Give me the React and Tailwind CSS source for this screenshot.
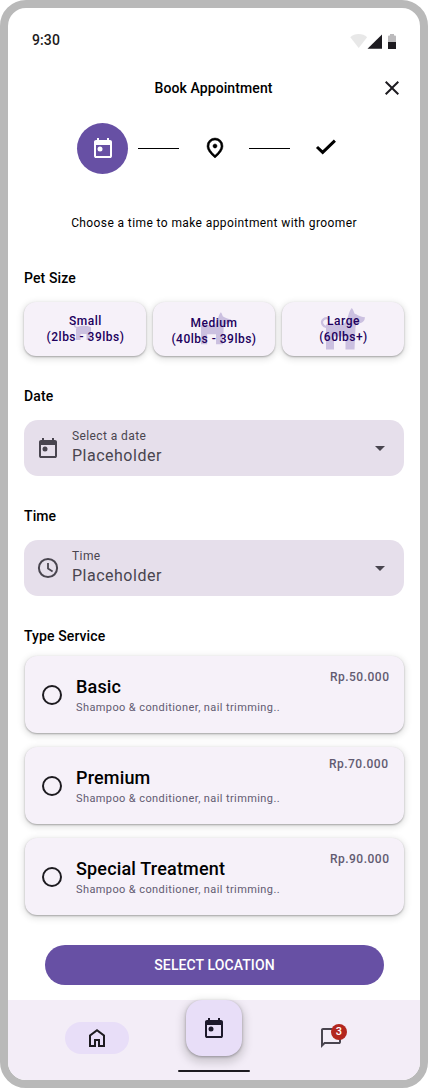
import React from "react";

function TodayIcon({ className }) {
  return (
    <svg viewBox="0 0 24 24" className={className} fill="currentColor">
      <path
        fillRule="evenodd"
        d="M5 22q-.825 0-1.412-.587Q3 20.825 3 20V6q0-.825.588-1.412Q4.175 4 5 4h1V2h2v2h8V2h2v2h1q.825 0 1.413.588Q21 5.175 21 6v14q0 .825-.587 1.413Q19.825 22 19 22Zm0-2h14V9H5Z"
      />
      <circle cx="9" cy="13" r="2.5" />
    </svg>
  );
}

function ScheduleIcon({ className }) {
  return (
    <svg viewBox="0 0 24 24" className={className} fill="none" stroke="currentColor" strokeWidth="2">
      <circle cx="12" cy="12" r="9.1" />
      <path d="M12 7v5.500l4.600 2.900" strokeWidth="1.800" />
    </svg>
  );
}

function StatusIcons() {
  return (
    <svg viewBox="0 0 48 18" className="h-[18px] w-12" fill="#1d1b20">
      <path d="M.3 6.200C2.500 4.300 5.300 3.100 8.700 3.100s6.200 1.200 8.400 3.100L8.700 17Z" fillOpacity=".1" />
      <path d="M17.500 17.700 32 3.400V17.700Z" />
      <path d="M38 11V5.500Q38 4.500 39 4.500h1V3h4v1.500h1q1 0 1 1V11Z" fillOpacity=".3" />
      <path d="M38 11h8v7h-8Z" />
    </svg>
  );
}

const dog =
  "M3 16.500H19Q22.500 15.500 24.500 10C25.500 7.500 26 3 28.700 0C30 1 30.500 3.200 31.500 5.500C34 6.500 36 8.300 42 9.300Q41.500 14.500 37 15.300Q33 15.300 32.500 19L31.500 41.500H22.500V28.500H11V41.500H3Z";

const pets = [
  {
    name: "Small",
    range: "(2lbs - 39lbs)",
    pad: "pl-px",
    art: (
      <g>
        <path d="M50.500 22Q50 25.500 53.500 25.500" fill="none" stroke="#cbc0e0" strokeWidth="1.500" />
        <path d="M53 25Q60 22.500 67 25V38H62.500V32H56.500V38H52V27Z" />
      </g>
    ),
  },
  {
    name: "Medium",
    range: "(40lbs - 39lbs)",
    pad: "pt-[4px]",
    art: <path transform="translate(45.7 10.3) scale(.77)" d={dog} />,
  },
  {
    name: "Large",
    range: "(60lbs+)",
    pad: "pl-px",
    art: (
      <g transform="translate(41 6)">
        <path d="M6.300 11.500A4.200 4.200 0 1 0 5 18.300" fill="none" stroke="#cbc0e0" strokeWidth="2.200" />
        <path d={dog} />
      </g>
    ),
  },
];

const services = [
  { name: "Basic", price: "Rp.50.000", pos: "pt-[13px] pr-[14.5px]" },
  { name: "Premium", price: "Rp.70.000", pos: "pt-[9px] pr-[15.5px]" },
  { name: "Special Treatment", price: "Rp.90.000", pos: "pt-[13px] pr-[14.5px]" },
];

const cardShadow = "shadow-[0_1px_2px_rgba(0,0,0,0.3),0_2px_6px_2px_rgba(0,0,0,0.1)]";

function Heading({ children, className }) {
  return (
    <h2 className={"h-5 text-[14px] leading-5 font-medium tracking-[0.1px] text-black " + className}>
      {children}
    </h2>
  );
}

function SelectField({ icon, label }) {
  return (
    <button className="mt-3.5 flex h-14 w-full items-center rounded-[14px] bg-[#e6dfeb] pr-3 pl-3 text-left text-[#49454f]">
      {icon}
      <span className="ml-3 flex flex-1 flex-col">
        <span className="text-[12px] leading-4 tracking-[0.4px]">{label}</span>
        <span className="text-[16px] leading-6 tracking-[0.5px]">Placeholder</span>
      </span>
      <svg viewBox="0 0 24 24" className="size-6" fill="currentColor">
        <path d="m7 10 5 5 5-5Z" />
      </svg>
    </button>
  );
}

export default function App() {
  return (
    <div className="flex h-[1088px] w-[428px] flex-col overflow-hidden rounded-[26px] border-8 border-[#b9b9b9] bg-white font-['Roboto',sans-serif]">
      <div className="flex h-16 shrink-0 items-center justify-between pr-[22px] pl-6">
        <span className="text-[14px] leading-5 font-medium tracking-[0.1px] text-[#1d1b20]">9:30</span>
        <StatusIcons />
      </div>

      <header className="grid h-8 shrink-0 grid-cols-[40px_1fr_40px] items-center">
        <h1 className="col-start-2 pr-px text-center text-[14px] leading-5 font-medium tracking-[0.1px] text-black">
          Book Appointment
        </h1>
        <button className="flex">
          <svg viewBox="0 0 24 24" className="size-6" fill="#1d1b20">
            <path d="M6.400 19 5 17.600l5.600-5.600L5 6.400 6.400 5l5.600 5.600L17.600 5 19 6.400 13.400 12l5.600 5.600-1.400 1.400-5.600-5.600Z" />
          </svg>
        </button>
      </header>

      <div className="mt-[19px] flex h-[51px] shrink-0 items-center pl-[69px]">
        <div className="flex size-[51px] items-center justify-center rounded-full bg-[#6750a4] pr-[1px] pb-[1px] text-white">
          <TodayIcon className="ml-px size-6" />
        </div>
        <div className="ml-2.5 h-px w-[41px] bg-black" />
        <svg
          viewBox="0 0 24 24"
          className="mb-px ml-6 size-6"
          fill="#000"
          stroke="#000"
          strokeWidth=".5"
        >
          <path d="M12 12q.825 0 1.412-.588Q14 10.825 14 10t-.588-1.413Q12.825 8 12 8q-.825 0-1.412.587Q10 9.175 10 10q0 .825.588 1.412Q11.175 12 12 12Zm0 7.350q3.050-2.800 4.525-5.088Q18 11.975 18 10.200q0-2.725-1.738-4.463Q14.525 4 12 4 9.475 4 7.737 5.737 6 7.475 6 10.200q0 1.775 1.475 4.062Q8.950 16.550 12 19.350ZM12 22q-4.025-3.425-6.012-6.362Q4 12.700 4 10.200q0-3.750 2.413-5.975Q8.825 2 12 2t5.587 2.225Q20 6.450 20 10.200q0 2.500-1.988 5.438Q16.025 18.575 12 22Z" />
        </svg>
        <div className="ml-[22px] h-px w-[41px] bg-black" />
        <svg
          viewBox="0 0 24 24"
          className="mb-px ml-6 size-6"
          fill="none"
          stroke="#000"
          strokeWidth="3"
        >
          <path d="m3 11 5.700 5.400L20.900 4.700" />
        </svg>
      </div>

      <p className="mt-[39px] h-5 shrink-0 text-center text-[12px] leading-5 tracking-[0.4px] text-black">
        Choose a time to make appointment with groomer
      </p>

      <main className="flex flex-col px-4">
        <Heading className="mt-[35px]">Pet Size</Heading>
        <div className="mt-3.5 grid grid-cols-3 gap-[7px]">
          {pets.map((pet) => (
            <button
              key={pet.name}
              className={"grid h-[54px] place-items-center rounded-xl bg-[#f6f1f9] " + cardShadow}
            >
              <svg
                viewBox="0 0 122 54"
                className="col-start-1 row-start-1 h-[54px] w-[122px]"
                fill="#cbc0e0"
              >
                {pet.art}
              </svg>
              <span
                className={
                  "col-start-1 row-start-1 text-center text-[12px] leading-4 font-medium tracking-[0.5px] text-[#21005d] " +
                  pet.pad
                }
              >
                {pet.name}
                <br />
                {pet.range}
              </span>
            </button>
          ))}
        </div>

        <Heading className="mt-[30px]">Date</Heading>
        <SelectField icon={<TodayIcon className="size-6" />} label="Select a date" />

        <Heading className="mt-[30px]">Time</Heading>
        <SelectField icon={<ScheduleIcon className="size-6" />} label="Time" />

        <Heading className="mt-[30px]">Type Service</Heading>
        <div className="mt-2.5 ml-px flex flex-col gap-3.5">
          {services.map((s) => (
            <label key={s.name} className={"flex h-[77px] rounded-xl bg-[#f6f1f9] " + cardShadow}>
              <svg viewBox="0 0 24 24" className="mt-[27px] ml-[15px] size-6">
                <circle cx="12" cy="12" r="9" fill="none" stroke="#1d1b20" strokeWidth="2" />
              </svg>
              <span className="ml-3 flex flex-1 flex-col pt-[19px]">
                <span className="text-[18px] leading-6 font-medium tracking-[0.17px] text-black">
                  {s.name}
                </span>
                <span className="mt-px text-[11px] leading-4 tracking-[0.4px] text-[#625b71]">
                  Shampoo &amp; conditioner, nail trimming..
                </span>
              </span>
              <span
                className={
                  "text-[12px] leading-4 font-medium tracking-[0.5px] text-[#625b71] " + s.pos
                }
              >
                {s.price}
              </span>
            </label>
          ))}
        </div>
      </main>

      <button className="mt-[30px] ml-[37px] h-10 w-[339px] shrink-0 rounded-full bg-[#6750a4] text-[14px] leading-5 font-medium tracking-[0.1px] text-white">
        SELECT LOCATION
      </button>

      <nav className="mt-[15px] grid h-20 shrink-0 grid-cols-[178px_56px_178px] bg-[#f3edf7]">
        <button className="mt-[22px] ml-[57px] flex h-8 w-16 items-center justify-center rounded-full bg-[#e8def8]">
          <svg viewBox="0 0 24 24" className="size-6" fill="#1d1b20">
            <path d="M6 19h3v-6h6v6h3v-9l-6-4.500L6 10v9Zm-2 2V9l8-6 8 6v12h-7v-6h-2v6H4Z" />
          </svg>
        </button>
        <div className="flex flex-col items-center">
          <button className="flex size-14 shrink-0 items-center justify-center rounded-2xl bg-[#e8def8] text-[#1d192b] shadow-[0_1px_3px_rgba(0,0,0,0.3),0_4px_8px_3px_rgba(0,0,0,0.15)]">
            <TodayIcon className="size-6" />
          </button>
          <div className="mt-3.5 h-0.5 w-[72px] shrink-0 rounded-full bg-[#1d1b20]" />
        </div>
        <button className="relative mt-[26px] ml-[77px] size-6">
          <svg viewBox="0 0 24 24" className="size-6" fill="#49454f">
            <path d="M2 22V4q0-.825.588-1.412Q3.175 2 4 2h16q.825 0 1.413.588Q22 3.175 22 4v12q0 .825-.587 1.413Q20.825 18 20 18H6Zm2-4.825L5.175 16H20V4H4Z" />
          </svg>
          <span className="absolute -top-0.5 left-3 flex size-4 items-center justify-center rounded-full bg-[#b3261e] text-[11px] leading-4 font-medium text-white">
            3
          </span>
        </button>
      </nav>
    </div>
  );
}
